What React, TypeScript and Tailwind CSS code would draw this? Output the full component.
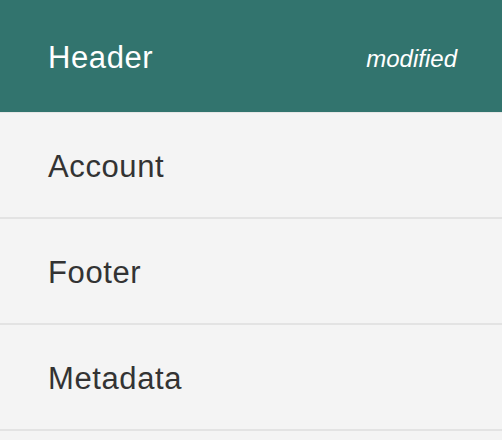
const rows = ["Account", "Footer", "Metadata"];

export default function App() {
  return (
    <div className="h-[440px] w-[502px] overflow-hidden bg-[#f4f4f4] font-['Liberation_Sans',Arial,sans-serif]">
      <div className="flex h-[113px] items-center justify-between border-b border-[#e6e6e6] bg-[#32746e] pl-12 pr-[45px] pt-[5px]">
        <span className="text-[31px] tracking-[0.6px] text-white">Header</span>
        <span className="text-[24px] italic text-white">modified</span>
      </div>
      {rows.map((row) => (
        <div
          key={row}
          className="flex h-[106px] items-center border-b-2 border-[#e3e3e3] pl-12 pt-[4px] text-[31px] tracking-[0.6px] text-[#333333]"
        >
          {row}
        </div>
      ))}
    </div>
  );
}
